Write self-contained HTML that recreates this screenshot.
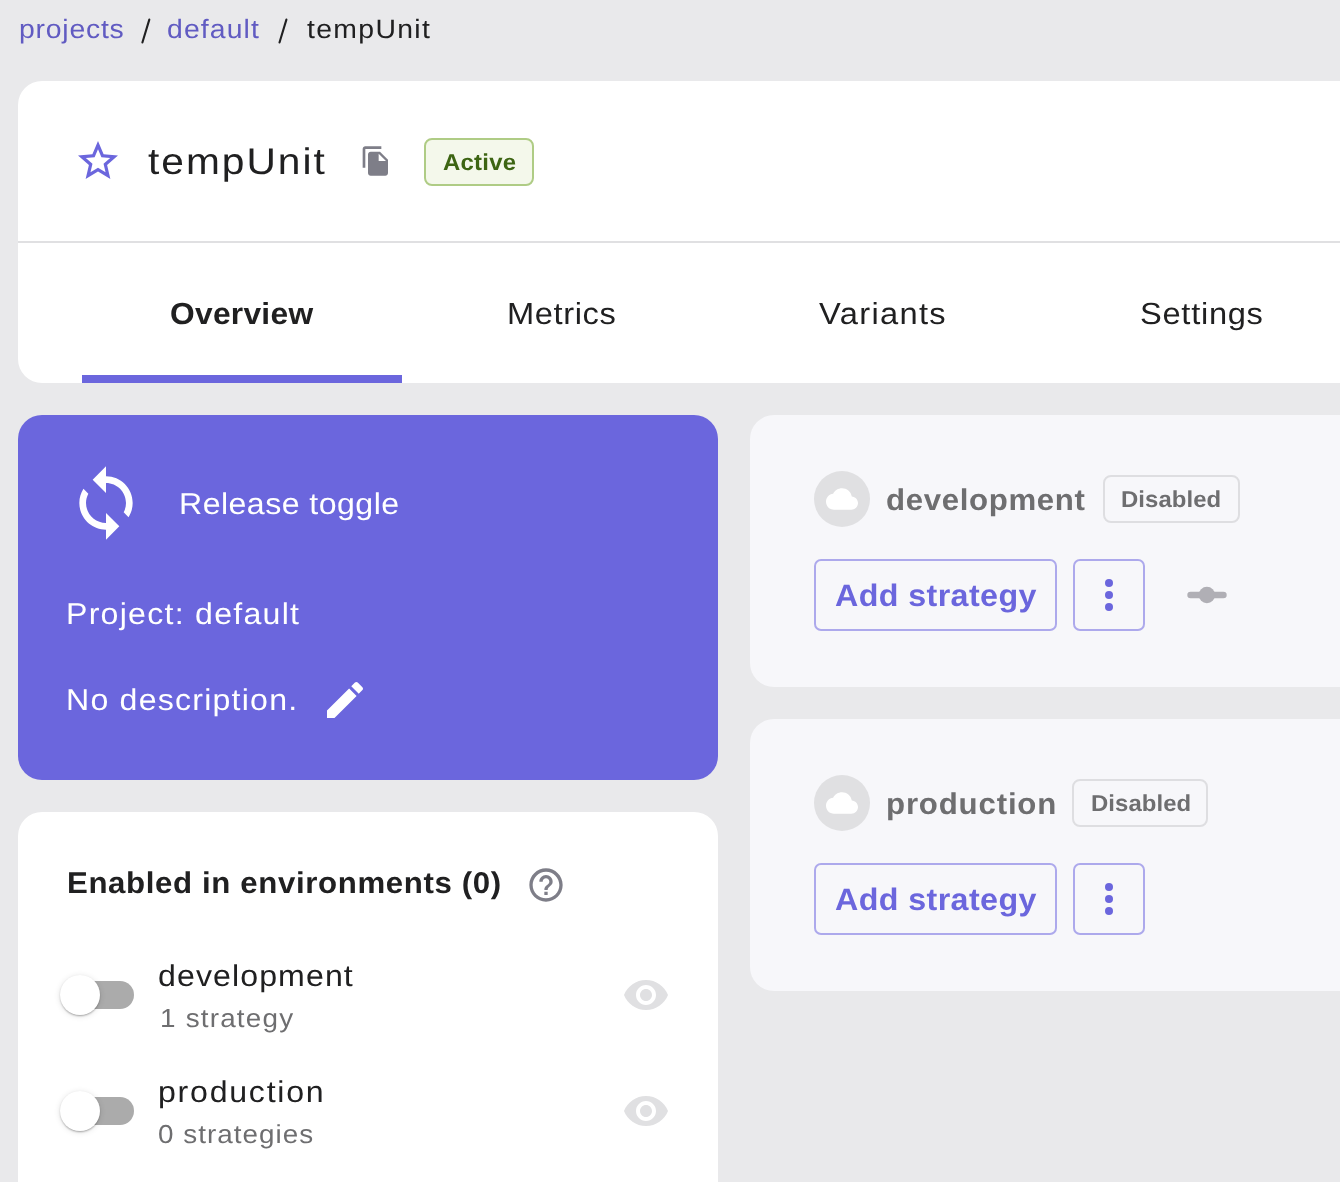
<!DOCTYPE html>
<html><head><meta charset="utf-8">
<style>
html,body{margin:0;padding:0;}
body{width:1340px;height:1182px;overflow:hidden;background:#E9E9EB;position:relative;font-family:"Liberation Sans",sans-serif;}
.t{position:absolute;white-space:nowrap;line-height:1;text-rendering:geometricPrecision;will-change:transform;transform-origin:0 0;}
.abs{position:absolute;}
svg{position:absolute;display:block;}
</style></head><body>
<svg style="left:0;top:0" width="300" height="50" viewBox="0 0 300 50"><line x1="149.3" y1="19.6" x2="142.4" y2="42.5" stroke="#202021" stroke-width="2.1" stroke-linecap="round"/><line x1="286.4" y1="19.6" x2="279.5" y2="42.5" stroke="#202021" stroke-width="2.1" stroke-linecap="round"/></svg>
<!-- header card -->
<div class="abs" style="left:18px;top:81px;width:1400px;height:302px;background:#fff;border-radius:24px;overflow:hidden">
  <div class="abs" style="left:0;top:160px;width:1400px;height:2px;background:#E0E0E2"></div>
  <div class="abs" style="left:64px;top:294px;width:320px;height:8px;background:#6B66DD"></div>
</div>
<!-- star -->
<svg style="left:74px;top:137px" width="48" height="48" viewBox="0 0 24 24"><path fill="#6B66DD" d="M22 9.24l-7.19-.62L12 2 9.19 8.63 2 9.24l5.46 4.73L5.82 21 12 17.27 18.18 21l-1.63-7.03L22 9.24zM12 15.4l-3.76 2.27 1-4.28-3.32-2.88 4.38-.38L12 6.1l1.71 4.04 4.38.38-3.32 2.88 1 4.28L12 15.4z"/></svg>
<!-- copy icon -->
<svg style="left:360px;top:145px" width="32" height="32" viewBox="0 0 24 24"><path fill="#7E7E88" d="M16 1H4c-1.1 0-2 .9-2 2v14h2V3h12V1zm-1 4l6 6v10c0 1.1-.9 2-2 2H7.99C6.89 23 6 22.1 6 21l.01-14c0-1.1.89-2 1.99-2h7zm-1 7h5.5L14 6.5V12z"/></svg>
<!-- active badge -->
<div class="abs" style="left:424px;top:138px;width:106px;height:44px;border:2px solid #AFCC85;background:#F4F8EB;border-radius:8px"></div>

<!-- purple card -->
<div class="abs" style="left:18px;top:415px;width:700px;height:365px;background:#6B66DD;border-radius:24px"></div>
<svg style="left:66px;top:463px" width="80" height="80" viewBox="0 0 24 24"><path fill="#fff" d="M12 4V1L8 5l4 4V6c3.31 0 6 2.69 6 6 0 1.01-.25 1.97-.7 2.8l1.46 1.46C19.54 15.03 20 13.57 20 12c0-4.42-3.58-8-8-8zm0 14c-3.31 0-6-2.690-6-6 0-1.01.25-1.97.7-2.8L5.24 7.74C4.460 8.97 4 10.43 4 12c0 4.42 3.58 8 8 8v3l4-4-4-4v3z"/></svg>
<svg style="left:321px;top:676px" width="48" height="48" viewBox="0 0 24 24"><path fill="#fff" d="M3 17.25V21h3.75L17.81 9.94l-3.75-3.75L3 17.25zM20.71 7.04c.39-.39.39-1.02 0-1.41l-2.34-2.34c-.39-.39-1.02-.39-1.41 0l-1.83 1.83 3.75 3.75 1.83-1.83z"/></svg>

<!-- env cards -->
<div class="abs" style="left:750px;top:415px;width:700px;height:272px;background:#F7F7FA;border-radius:24px"></div>
<div class="abs" style="left:750px;top:719px;width:700px;height:272px;background:#F7F7FA;border-radius:24px"></div>

<!-- dev card contents -->
<div class="abs" style="left:814px;top:471px;width:56px;height:56px;border-radius:50%;background:#E0E0E2"></div>
<svg style="left:826px;top:483px" width="32" height="32" viewBox="0 0 24 24"><path fill="#fff" d="M19.35 10.04C18.67 6.59 15.64 4 12 4 9.11 4 6.6 5.64 5.350 8.04 2.34 8.36 0 10.91 0 14c0 3.31 2.69 6 6 6h13c2.76 0 5-2.24 5-5 0-2.64-2.05-4.78-4.65-4.96z"/></svg>
<div class="abs" style="left:1103px;top:475px;width:133px;height:44px;border:2px solid #DEDEE1;border-radius:8px"></div>
<div class="abs" style="left:814px;top:559px;width:239px;height:68px;border:2px solid #ADA9EC;border-radius:7px"></div>
<div class="abs" style="left:1073px;top:559px;width:68px;height:68px;border:2px solid #ADA9EC;border-radius:7px"></div>
<svg style="left:1073px;top:559px" width="72" height="72" viewBox="0 0 72 72"><circle cx="36" cy="24" r="4" fill="#6B66DD"/><circle cx="36" cy="36" r="4" fill="#6B66DD"/><circle cx="36" cy="48" r="4" fill="#6B66DD"/></svg>
<svg style="left:1180px;top:580px" width="54" height="30" viewBox="0 0 54 30"><line x1="10.5" y1="15" x2="43.5" y2="15" stroke="#B0AFB5" stroke-width="6.4" stroke-linecap="round"/><circle cx="26.9" cy="15" r="8.2" fill="#B0AFB5"/></svg>

<!-- prod card contents -->
<div class="abs" style="left:814px;top:775px;width:56px;height:56px;border-radius:50%;background:#E0E0E2"></div>
<svg style="left:826px;top:787px" width="32" height="32" viewBox="0 0 24 24"><path fill="#fff" d="M19.35 10.04C18.67 6.59 15.64 4 12 4 9.11 4 6.6 5.64 5.350 8.04 2.34 8.36 0 10.91 0 14c0 3.31 2.69 6 6 6h13c2.76 0 5-2.24 5-5 0-2.64-2.05-4.78-4.65-4.96z"/></svg>
<div class="abs" style="left:1072px;top:779px;width:132px;height:44px;border:2px solid #DEDEE1;border-radius:8px"></div>
<div class="abs" style="left:814px;top:863px;width:239px;height:68px;border:2px solid #ADA9EC;border-radius:7px"></div>
<div class="abs" style="left:1073px;top:863px;width:68px;height:68px;border:2px solid #ADA9EC;border-radius:7px"></div>
<svg style="left:1073px;top:863px" width="72" height="72" viewBox="0 0 72 72"><circle cx="36" cy="24" r="4" fill="#6B66DD"/><circle cx="36" cy="36" r="4" fill="#6B66DD"/><circle cx="36" cy="48" r="4" fill="#6B66DD"/></svg>

<!-- enabled card -->
<div class="abs" style="left:18px;top:812px;width:700px;height:500px;background:#fff;border-radius:24px"></div>
<svg style="left:526px;top:865px" width="40" height="40" viewBox="0 0 24 24"><path fill="#7E7E88" d="M11 18h2v-2h-2v2zm1-16C6.48 2 2 6.48 2 12s4.48 10 10 10 10-4.48 10-10S17.52 2 12 2zm0 18c-4.41 0-8-3.59-8-8s3.59-8 8-8 8 3.59 8 8-3.59 8-8 8zm0-14c-2.21 0-4 1.79-4 4h2c0-1.1.9-2 2-2s2 .9 2 2c0 2-3 1.75-3 5h2c0-2.25 3-2.5 3-5 0-2.21-1.79-4-4-4z"/></svg>
<!-- toggles -->
<div class="abs" style="left:66px;top:981px;width:68px;height:28px;border-radius:14px;background:#ABABAB"></div>
<div class="abs" style="left:60px;top:975px;width:40px;height:40px;border-radius:50%;background:#fff;box-shadow:0 2px 2px -1px rgba(0,0,0,.2),0 1px 2px 0 rgba(0,0,0,.14),0 1px 6px 0 rgba(0,0,0,.12)"></div>
<div class="abs" style="left:66px;top:1097px;width:68px;height:28px;border-radius:14px;background:#ABABAB"></div>
<div class="abs" style="left:60px;top:1091px;width:40px;height:40px;border-radius:50%;background:#fff;box-shadow:0 2px 2px -1px rgba(0,0,0,.2),0 1px 2px 0 rgba(0,0,0,.14),0 1px 6px 0 rgba(0,0,0,.12)"></div>
<!-- eyes -->
<svg style="left:622px;top:971px" width="48" height="48" viewBox="0 0 24 24"><path fill="#E0E0E2" d="M12 4.5C7 4.5 2.73 7.61 1 12c1.73 4.39 6 7.5 11 7.5s9.27-3.11 11-7.5c-1.73-4.39-6-7.5-11-7.5zM12 17c-2.76 0-5-2.24-5-5s2.24-5 5-5 5 2.24 5 5-2.24 5-5 5zm0-8c-1.66 0-3 1.34-3 3s1.34 3 3 3 3-1.34 3-3-1.34-3-3-3z"/></svg>
<svg style="left:622px;top:1087px" width="48" height="48" viewBox="0 0 24 24"><path fill="#E0E0E2" d="M12 4.5C7 4.5 2.73 7.61 1 12c1.73 4.39 6 7.5 11 7.5s9.27-3.11 11-7.5c-1.73-4.39-6-7.5-11-7.5zM12 17c-2.76 0-5-2.24-5-5s2.24-5 5-5 5 2.24 5 5-2.24 5-5 5zm0-8c-1.66 0-3 1.34-3 3s1.34 3 3 3 3-1.34 3-3-1.34-3-3-3z"/></svg>

<div class="t" style="left:18.78px;top:16.00px;font-size:26.5px;font-weight:400;color:#615BC2;letter-spacing:0.735px;transform:scaleX(1.07)">projects</div>
<div class="t" style="left:167.43px;top:16.00px;font-size:26.5px;font-weight:400;color:#615BC2;letter-spacing:1.052px;transform:scaleX(1.07)">default</div>
<div class="t" style="left:307.00px;top:16.00px;font-size:26.5px;font-weight:400;color:#202021;letter-spacing:1.249px;transform:scaleX(1.07)">tempUnit</div>
<div class="t" style="left:148.20px;top:143.00px;font-size:37px;font-weight:400;color:#202021;letter-spacing:1.811px;transform:scaleX(1.1)">tempUnit</div>
<div class="t" style="left:442.80px;top:151.00px;font-size:23px;font-weight:700;color:#3D6513;letter-spacing:0.236px;transform:scaleX(1.04)">Active</div>
<div class="t" style="left:170.16px;top:299.00px;font-size:30.5px;font-weight:700;color:#202021;letter-spacing:0.273px;transform:scaleX(1.04)">Overview</div>
<div class="t" style="left:507.16px;top:299.00px;font-size:30.5px;font-weight:400;color:#202021;letter-spacing:0.553px;transform:scaleX(1.07)">Metrics</div>
<div class="t" style="left:819.00px;top:299.00px;font-size:30.5px;font-weight:400;color:#202021;letter-spacing:1.251px;transform:scaleX(1.07)">Variants</div>
<div class="t" style="left:1140.23px;top:299.00px;font-size:30.5px;font-weight:400;color:#202021;letter-spacing:0.670px;transform:scaleX(1.07)">Settings</div>
<div class="t" style="left:178.66px;top:490.00px;font-size:30px;font-weight:400;color:#FFFFFF;letter-spacing:0.426px;transform:scaleX(1.07)">Release toggle</div>
<div class="t" style="left:66.36px;top:600.00px;font-size:30px;font-weight:400;color:#FFFFFF;letter-spacing:1.172px;transform:scaleX(1.07)">Project: default</div>
<div class="t" style="left:66.36px;top:686.00px;font-size:30px;font-weight:400;color:#FFFFFF;letter-spacing:1.137px;transform:scaleX(1.07)">No description.</div>
<div class="t" style="left:886.36px;top:486.00px;font-size:30px;font-weight:700;color:#6E6E70;letter-spacing:0.624px;transform:scaleX(1.04)">development</div>
<div class="t" style="left:1121.46px;top:488.00px;font-size:23px;font-weight:700;color:#6E6E70;letter-spacing:0.060px;transform:scaleX(1.04)">Disabled</div>
<div class="t" style="left:834.50px;top:580.00px;font-size:31px;font-weight:700;color:#6B66DD;letter-spacing:0.380px;transform:scaleX(1.04)">Add strategy</div>
<div class="t" style="left:885.86px;top:790.00px;font-size:30px;font-weight:700;color:#6E6E70;letter-spacing:0.792px;transform:scaleX(1.04)">production</div>
<div class="t" style="left:1090.66px;top:792.00px;font-size:23px;font-weight:700;color:#6E6E70;letter-spacing:0.060px;transform:scaleX(1.04)">Disabled</div>
<div class="t" style="left:834.50px;top:884.00px;font-size:31px;font-weight:700;color:#6B66DD;letter-spacing:0.380px;transform:scaleX(1.04)">Add strategy</div>
<div class="t" style="left:66.92px;top:869.00px;font-size:30px;font-weight:700;color:#202021;letter-spacing:0.603px;transform:scaleX(1.04)">Enabled in environments (0)</div>
<div class="t" style="left:158.33px;top:962.00px;font-size:30px;font-weight:400;color:#202021;letter-spacing:1.023px;transform:scaleX(1.07)">development</div>
<div class="t" style="left:159.73px;top:1005.00px;font-size:26px;font-weight:400;color:#6E6E70;letter-spacing:1.133px;transform:scaleX(1.07)">1 strategy</div>
<div class="t" style="left:158.33px;top:1078.00px;font-size:30px;font-weight:400;color:#202021;letter-spacing:1.637px;transform:scaleX(1.07)">production</div>
<div class="t" style="left:157.53px;top:1121.00px;font-size:26px;font-weight:400;color:#6E6E70;letter-spacing:0.965px;transform:scaleX(1.07)">0 strategies</div>
</body></html>
